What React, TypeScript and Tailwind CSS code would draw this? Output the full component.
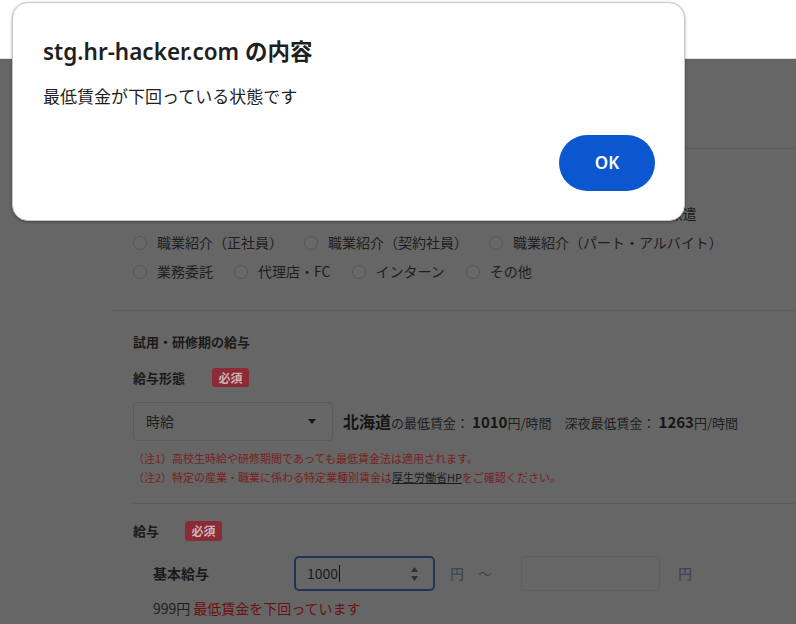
import React from "react";

const FONT = { fontFamily: '"Noto Sans CJK JP", "Noto Sans", sans-serif' };
const DIALOG_FONT = { fontFamily: '"Noto Sans", "Noto Sans CJK JP", sans-serif' };

function Radio({ label, tight }: { label: string; tight?: boolean }) {
  return (
    <label className={`flex items-center ${tight ? "mr-[20px]" : "mr-[21px]"}`}>
      <span className="w-[14px] h-[14px] rounded-full border border-[#575757] bg-[#686868] shrink-0" />
      <span className="ml-[10px] whitespace-nowrap">{label}</span>
    </label>
  );
}

function Badge({ h }: { h: string }) {
  return (
    <span
      className={`${h} w-[37px] flex items-center justify-center rounded-[3px] bg-[#8a2b35] text-[#cdb3b6] text-[12px] font-bold leading-none`}
    >
      必須
    </span>
  );
}

export default function App() {
  const row1 = ["正社員", "契約社員", "嘱託社員", "パート・アルバイト", "紹介予定派遣"];
  const row2 = ["職業紹介（正社員）", "職業紹介（契約社員）", "職業紹介（パート・アルバイト）"];
  const row3 = ["業務委託", "代理店・FC", "インターン", "その他"];

  return (
    <div className="relative w-[796px] h-[624px] overflow-hidden flex flex-col" style={FONT}>
      {/* browser top strip */}
      <div className="h-[59px] shrink-0 bg-white border-b border-[#dedede]" />

      {/* dimmed page */}
      <div className="flex-1 bg-[#666666] pl-[112px] text-[#1e1e1e]">
        <div className="h-[89px]" />

        {/* employment type */}
        <div className="border-t border-[#5c5c5c] pl-[21px] pb-[24px] text-[14px]">
          <div className="h-[50px]" />
          <div className="h-[29px] flex items-center">
            {row1.map((l) => (
              <Radio key={l} label={l} tight />
            ))}
          </div>
          <div className="h-[29px] flex items-center">
            {row2.map((l) => (
              <Radio key={l} label={l} />
            ))}
          </div>
          <div className="h-[29px] flex items-center">
            {row3.map((l) => (
              <Radio key={l} label={l} />
            ))}
          </div>
        </div>

        {/* trial salary */}
        <div className="border-t border-[#5c5c5c] pl-[21px] pt-[21px]">
          <div className="h-[20px] leading-[20px] text-[13px] font-bold text-[#1a1a1a]">試用・研修期の給与</div>
          <div className="mt-[16px] h-[19px] flex items-center">
            <span className="w-[79px] text-[13px] font-bold text-[#1a1a1a]">給与形態</span>
            <Badge h="h-[19px]" />
          </div>
          <div className="mt-[15px] h-[39px] flex items-center">
            <div className="w-[200px] h-[39px] border border-[#5a5a5a] rounded-[4px] flex items-center justify-between pl-[12px] pr-[16px] text-[14px] text-[#1e1e1e]">
              <span>時給</span>
              <svg width="8" height="5" viewBox="0 0 8 5">
                <path d="M0 0 L8 0 L4 5 Z" fill="#161616" />
              </svg>
            </div>
            <div className="ml-[10px] flex items-baseline text-[13px] text-[#1e1e1e] whitespace-nowrap">
              <span className="text-[16px] font-bold text-[#161616]">北海道</span>
              <span>の最低賃金：</span>
              <span className="ml-[3px] text-[15px] font-bold text-[#161616]">1010</span>
              <span>円/時間</span>
              <span className="ml-[13px]">深夜最低賃金：</span>
              <span className="ml-[3px] text-[15px] font-bold text-[#161616]">1263</span>
              <span>円/時間</span>
            </div>
          </div>
          <div className="mt-[8px] text-[11px] leading-[19px] text-[#772222]">
            <div>（注1）高校生時給や研修期間であっても最低賃金法は適用されます。</div>
            <div>
              （注2）特定の産業・職業に係わる特定業種別賃金は
              <span className="underline text-[#1a1a1a]">厚生労働省HP</span>
              をご確認ください。
            </div>
          </div>

          {/* salary */}
          <div className="mt-[16px] border-t border-[#5c5c5c] pt-[17px]">
            <div className="h-[20px] flex items-center">
              <span className="w-[52px] text-[13px] font-bold text-[#1a1a1a]">給与</span>
              <Badge h="h-[20px]" />
            </div>
            <div className="mt-[15px] h-[35px] flex items-center pl-[20px] text-[14px]">
              <span className="w-[141px] font-bold text-[#1a1a1a]">基本給与</span>
              <div className="w-[141px] h-[35px] border-2 border-[#1d3557] rounded-[5px] flex items-center justify-between pl-[11px] pr-[14px]">
                <span className="flex items-center text-[#1a1a1a]">
                  1000
                  <span className="w-px h-[17px] bg-[#111] ml-px" />
                </span>
                <svg width="9" height="16" viewBox="0 0 9 16">
                  <path d="M4.5 1 L8 6 L1 6 Z" fill="#303030" />
                  <path d="M1 10 L8 10 L4.5 15 Z" fill="#303030" />
                </svg>
              </div>
              <span className="ml-[15px] text-[#3d4655] font-medium">円</span>
              <span className="ml-[14px] text-[#3d4655]">～</span>
              <div className="ml-[29px] w-[139px] h-[35px] border border-[#5e5e5e] rounded-[4px]" />
              <span className="ml-[18px] text-[#3d4655] font-medium">円</span>
            </div>
            <div className="mt-[8px] pl-[20px] h-[18px] leading-[18px] text-[14px]">
              <span className="text-[#1e1e1e]">999円</span>
              <span className="ml-[3px] text-[#6e0f0f]">最低賃金を下回っています</span>
            </div>
          </div>
        </div>
      </div>

      {/* alert dialog */}
      <div
        className="absolute left-[12px] top-[2px] w-[673px] h-[219px] bg-white rounded-[16px] border border-[#c8c8c8] shadow-[0_1px_3px_rgba(0,0,0,0.35)] flex flex-col pl-[30px] pr-[29px] pt-[35px]"
        style={DIALOG_FONT}
      >
        <div className="h-[28px] leading-[28px] text-[22.5px] font-semibold text-[#1f1f1f] whitespace-nowrap">
          stg.hr-hacker.com の内容
        </div>
        <div
          className="mt-[18px] h-[24px] leading-[24px] text-[17px] text-[#1f1f1f]"
          style={FONT}
        >
          最低賃金が下回っている状態です
        </div>
        <div className="mt-[27px] flex justify-end">
          <button className="w-[96px] h-[56px] rounded-full bg-[#0b57d0] text-white text-[17px] font-semibold">
            OK
          </button>
        </div>
      </div>
    </div>
  );
}
